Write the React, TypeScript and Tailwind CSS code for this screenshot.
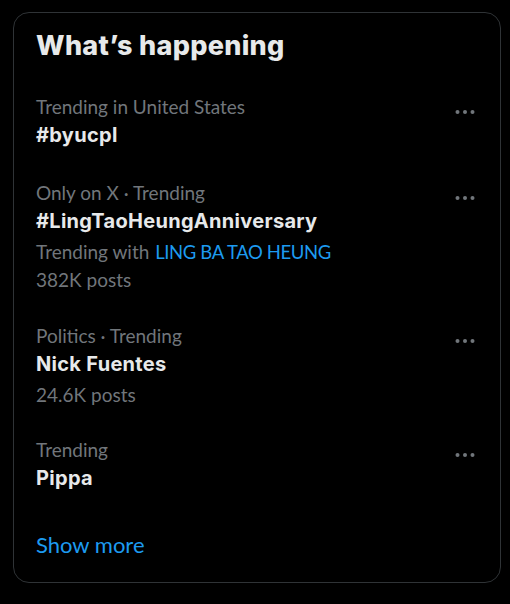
import type { ReactNode } from "react"

type Trend = {
  category: string
  name: string
  extra?: ReactNode
  posts?: string
  pb: string
}

const trends: Trend[] = [
  { category: "Trending in United States", name: "#byucpl", pb: "pb-[15px]" },
  {
    category: "Only on X · Trending",
    name: "#LingTaoHeungAnniversary",
    extra: (
      <>
        Trending with{" "}
        <span className="ml-[1px] text-[18.5px] tracking-[-0.4px] text-[#1d9bf0]">LING BA TAO HEUNG</span>
      </>
    ),
    posts: "382K posts",
    pb: "pb-[13px]",
  },
  { category: "Politics · Trending", name: "Nick Fuentes", posts: "24.6K posts", pb: "pb-[12px]" },
  { category: "Trending", name: "Pippa", pb: "pb-[15px]" },
]

function MoreIcon() {
  return (
    <svg width="20" height="6" viewBox="0 0 20 6" className="fill-[#71767b]">
      <circle cx="2.5" cy="3" r="2" />
      <circle cx="10" cy="3" r="2" />
      <circle cx="17.5" cy="3" r="2" />
    </svg>
  )
}

const bold = { fontFamily: "Inter, 'Noto Sans', sans-serif" }

export default function App() {
  return (
    <div
      className="min-h-[604px] bg-black pl-[13px] pt-[12px]"
      style={{ fontFamily: "Lato, 'Noto Sans', sans-serif" }}
    >
      <div className="flex h-[571px] w-[488px] flex-col rounded-[16px] border border-[#2f3336]">
        <div className="px-[22px] pb-[16px] pt-[17px]">
          <h2 className="text-[27px] font-extrabold leading-[32px] tracking-[0.3px] text-[#e7e9ea]" style={bold}>
            What’s happening
          </h2>
        </div>
        {trends.map((t) => (
          <div key={t.name} className={`relative px-[22px] pt-[15px] ${t.pb}`}>
            <div className="text-[19px] leading-[28px] text-[#71767b]">{t.category}</div>
            <div className="text-[20px] font-bold leading-[28px] tracking-[0.3px] text-[#e7e9ea]" style={bold}>
              {t.name}
            </div>
            {(t.extra || t.posts) && (
              <div className="mt-[3px]">
                {t.extra && <div className="text-[19px] leading-[28px] text-[#71767b]">{t.extra}</div>}
                {t.posts && <div className="text-[19px] leading-[28px] text-[#71767b]">{t.posts}</div>}
              </div>
            )}
            <div className="absolute right-[25px] top-[31px]">
              <MoreIcon />
            </div>
          </div>
        ))}
        <div className="px-[22px] pt-[24px]">
          <span className="text-[22px] leading-[28px] text-[#1d9bf0]">Show more</span>
        </div>
      </div>
    </div>
  )
}
